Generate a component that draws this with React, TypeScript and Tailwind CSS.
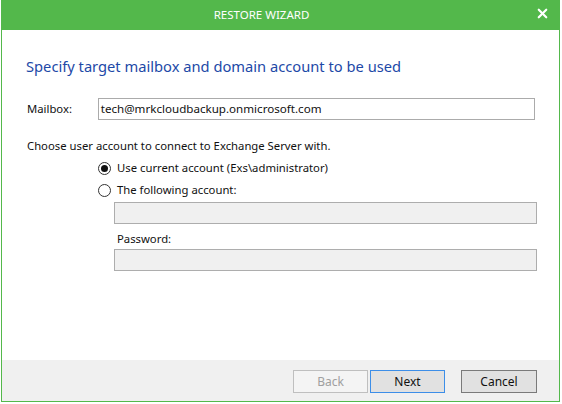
import { X } from "lucide-react";

const font = { fontFamily: '"Noto Sans", "Open Sans", sans-serif' };

function Radio({ checked }: { checked?: boolean }) {
  return (
    <span className="w-[13px] h-[13px] rounded-full border border-[#333] bg-white flex items-center justify-center shrink-0">
      {checked && <span className="w-[7px] h-[7px] rounded-full bg-[#111]"></span>}
    </span>
  );
}

export default function App() {
  return (
    <div className="w-[562px] h-[404px] bg-white pl-px" style={font}>
      <div className="w-[559px] h-[402px] border border-[#53b84b] border-t-0 flex flex-col">
        {/* Title bar */}
        <div className="h-[30px] shrink-0 bg-[#53b84b] relative flex items-center justify-center -mx-px pr-[38px]">
          <span className="text-white text-[11.5px]">RESTORE WIZARD</span>
          <X className="absolute right-[10px] top-[6px] w-[15px] h-[15px] text-white" strokeWidth={3.5} />
        </div>

        {/* Body */}
        <div className="flex-1 bg-white px-[24px] pt-[24px] text-[11.3px] text-[#111]">
          <h2 className="text-[14.7px] leading-[24px] text-[#1d49a7]">
            Specify target mailbox and domain account to be used
          </h2>

          <div className="flex items-center mt-[20px]">
            <span className="w-[72px] pl-[1px]">Mailbox:</span>
            <div className="w-[439px] h-[22px] border border-[#ababab] flex items-center px-[2px] text-[11.6px]">
              tech@mrkcloudbackup.onmicrosoft.com
            </div>
          </div>

          <div className="mt-[17px] pl-[1px] leading-[18px]">Choose user account to connect to Exchange Server with.</div>

          <div className="ml-[72px] mt-[2px] flex items-center gap-[6px] h-[22px]">
            <Radio checked />
            <span>Use current account (Exs\administrator)</span>
          </div>
          <div className="ml-[72px] flex items-center gap-[6px] h-[22px]">
            <Radio />
            <span>The following account:</span>
          </div>

          <div className="ml-[88px] w-[423px] mt-[1px]">
            <div className="h-[22px] border border-[#adadad] bg-[#f0f0f0]"></div>
            <div className="mt-[5px] h-[20px] leading-[20px] pl-[3px]">Password:</div>
            <div className="h-[22px] border border-[#adadad] bg-[#f0f0f0]"></div>
          </div>
        </div>

        {/* Footer */}
        <div className="h-[41px] shrink-0 bg-[#f0f0f0] flex items-start pt-[10px] justify-end pr-[22px] text-[12px]">
          <button className="w-[75px] h-[23px] border border-[#bfbfbf] bg-[#f4f4f4] text-[#a0a0a0]">Back</button>
          <button className="w-[75px] h-[23px] border border-[#3c8ee8] bg-[#e1e1e1] text-[#111] ml-[2px]">Next</button>
          <button className="w-[76px] h-[23px] border border-[#7a7a7a] bg-[#e1e1e1] text-[#111] ml-[16px]">Cancel</button>
        </div>
      </div>
    </div>
  );
}
